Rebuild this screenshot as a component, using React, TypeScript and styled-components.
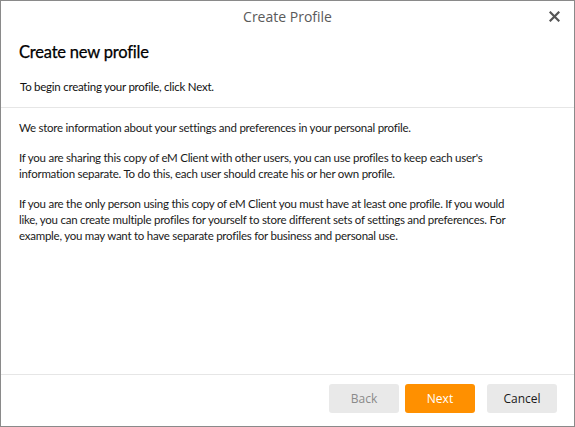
import React from "react";
import styled, { createGlobalStyle } from "styled-components";

const Global = createGlobalStyle`
  html, body { margin: 0; padding: 0; background: #fff; }
  body { font-family: Lato, "Open Sans", sans-serif; }
  * { box-sizing: border-box; }
`;

const Window = styled.div`
  width: 575px;
  height: 427px;
  border: 1px solid #8a8a8a;
  background: #fff;
  display: flex;
  flex-direction: column;
  color: #1a1a1a;
`;

const TitleBar = styled.div`
  position: relative;
  height: 30px;
  display: flex;
  align-items: center;
  justify-content: center;
  font-family: "Open Sans", sans-serif;
  font-size: 14px;
  color: #5a5a5a;
`;

const CloseButton = styled.button`
  position: absolute;
  right: 13px;
  top: 8px;
  width: 14px;
  height: 14px;
  padding: 0;
  border: none;
  background: transparent;
  display: flex;
  align-items: center;
  justify-content: center;
`;

const Header = styled.div`
  padding: 10px 18px 0 18px;
  height: 77px;
  border-bottom: 1px solid #e6e6e6;
`;

const Heading = styled.h1`
  margin: 0;
  font-size: 16.5px;
  letter-spacing: -0.2px;
  font-weight: 400;
  line-height: 22px;
  color: #000;
  -webkit-text-stroke: 0.25px #000;
`;

const Sub = styled.p`
  margin: 16px 0 0 1px;
  font-size: 11.5px;
  letter-spacing: -0.25px;
  line-height: 16px;
  color: #111;
`;

const Body = styled.div`
  flex: 1;
  padding: 12px 52px 0 18px;
  display: flex;
  flex-direction: column;
  gap: 14px;
  border-bottom: 1px solid #e6e6e6;
`;

const Para = styled.p`
  margin: 0;
  font-size: 11.5px;
  letter-spacing: -0.25px;
  line-height: 16px;
  color: #1a1a1a;
`;

const Footer = styled.div`
  height: 51px;
  display: flex;
  align-items: flex-start;
  justify-content: flex-end;
  padding: 9px 17px 0 0;
`;

const Button = styled.button<{ $variant: "primary" | "disabled" | "normal"; $gap?: number }>`
  width: 70px;
  height: 29px;
  margin-left: ${(p) => p.$gap ?? 0}px;
  border: none;
  border-radius: 3px;
  font-family: "Open Sans", sans-serif;
  font-size: 12px;
  background: ${(p) => (p.$variant === "primary" ? "#ff9000" : "#e9e9e9")};
  color: ${(p) =>
    p.$variant === "primary" ? "#ffffff" : p.$variant === "disabled" ? "#8a8a8a" : "#1a1a1a"};
`;

export default function App() {
  return (
    <>
      <Global />
      <Window>
        <TitleBar>
          Create Profile
          <CloseButton aria-label="Close">
            <svg width="11" height="11" viewBox="0 0 11 11">
              <path d="M1.5 1.5 L9.5 9.5 M9.5 1.5 L1.5 9.5" stroke="#555" strokeWidth="2.2" strokeLinecap="square" />
            </svg>
          </CloseButton>
        </TitleBar>
        <Header>
          <Heading>Create new profile</Heading>
          <Sub>To begin creating your profile, click Next.</Sub>
        </Header>
        <Body>
          <Para>We store information about your settings and preferences in your personal profile.</Para>
          <Para>
            If you are sharing this copy of eM Client with other users, you can use profiles to keep each user's
            information separate. To do this, each user should create his or her own profile.
          </Para>
          <Para>
            If you are the only person using this copy of eM Client you must have at least one profile. If you would
            like, you can create multiple profiles for yourself to store different sets of settings and preferences. For
            example, you may want to have separate profiles for business and personal use.
          </Para>
        </Body>
        <Footer>
          <Button $variant="disabled" disabled>Back</Button>
          <Button $variant="primary" $gap={6}>Next</Button>
          <Button $variant="normal" $gap={12}>Cancel</Button>
        </Footer>
      </Window>
    </>
  );
}
